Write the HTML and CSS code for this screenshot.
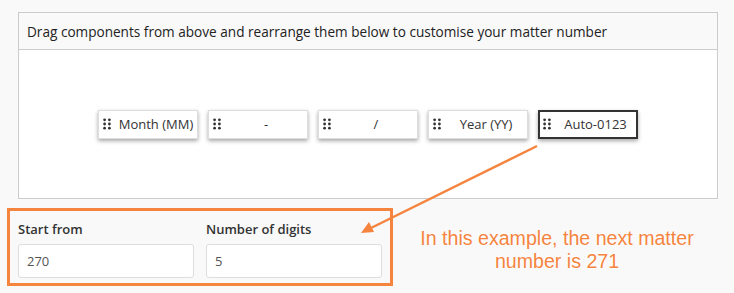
FILE: index.html
```html
<!DOCTYPE html>
<html lang="en">
<head>
  <meta charset="UTF-8" />
  <title>Matter number format</title>
  <link rel="stylesheet" href="styles.css">
</head>
<body>

  <div class="page">
    <!-- Format builder -->
    <div class="panel">
      <div class="panel-head">Drag components from above and rearrange them below to customise your matter number</div>
      <div class="panel-body">
        <div class="chip">
          <svg class="grip" viewBox="0 0 8 12"><circle cx="1.6" cy="1.8" r="1.4"/><circle cx="6.4" cy="1.8" r="1.4"/><circle cx="1.6" cy="6" r="1.4"/><circle cx="6.4" cy="6" r="1.4"/><circle cx="1.6" cy="10.2" r="1.4"/><circle cx="6.4" cy="10.2" r="1.4"/></svg>
          <span>Month (MM)</span>
        </div>
        <div class="chip">
          <svg class="grip" viewBox="0 0 8 12"><circle cx="1.6" cy="1.8" r="1.4"/><circle cx="6.4" cy="1.8" r="1.4"/><circle cx="1.6" cy="6" r="1.4"/><circle cx="6.4" cy="6" r="1.4"/><circle cx="1.6" cy="10.2" r="1.4"/><circle cx="6.4" cy="10.2" r="1.4"/></svg>
          <span>-</span>
        </div>
        <div class="chip">
          <svg class="grip" viewBox="0 0 8 12"><circle cx="1.6" cy="1.8" r="1.4"/><circle cx="6.4" cy="1.8" r="1.4"/><circle cx="1.6" cy="6" r="1.4"/><circle cx="6.4" cy="6" r="1.4"/><circle cx="1.6" cy="10.2" r="1.4"/><circle cx="6.4" cy="10.2" r="1.4"/></svg>
          <span>/</span>
        </div>
        <div class="chip">
          <svg class="grip" viewBox="0 0 8 12"><circle cx="1.6" cy="1.8" r="1.4"/><circle cx="6.4" cy="1.8" r="1.4"/><circle cx="1.6" cy="6" r="1.4"/><circle cx="6.4" cy="6" r="1.4"/><circle cx="1.6" cy="10.2" r="1.4"/><circle cx="6.4" cy="10.2" r="1.4"/></svg>
          <span>Year (YY)</span>
        </div>
        <div class="chip selected">
          <svg class="grip" viewBox="0 0 8 12"><circle cx="1.6" cy="1.8" r="1.4"/><circle cx="6.4" cy="1.8" r="1.4"/><circle cx="1.6" cy="6" r="1.4"/><circle cx="6.4" cy="6" r="1.4"/><circle cx="1.6" cy="10.2" r="1.4"/><circle cx="6.4" cy="10.2" r="1.4"/></svg>
          <span>Auto-0123</span>
        </div>
      </div>
    </div>

    <!-- Counter settings + note -->
    <div class="settings-row">
      <div class="settings">
        <div class="field">
          <label>Start from</label>
          <input type="text" value="270">
        </div>
        <div class="field">
          <label>Number of digits</label>
          <input type="text" value="5">
        </div>
      </div>
      <div class="note">In this example, the next matter<br>number is 271</div>
    </div>

    <!-- Callout arrow -->
    <svg class="callout" viewBox="0 0 734 293">
      <line x1="537" y1="146" x2="371" y2="228" />
      <polygon points="361,233 374,232 369,222" />
    </svg>
  </div>

</body>
</html>
```

FILE: styles.css
```css
* { box-sizing: border-box; margin:0; padding:0 }
body {
  font-family: 'Open Sans', 'Noto Sans', sans-serif;
  background: #f9f9f9;
  color: #333;
  font-size: 13.6px;
}

.page {
  position: relative;
  width: 734px;
  height: 293px;
  padding: 12px 16px 0 18px;
}

.panel {
  width: 700px;
  border: 1px solid #ccc;
}

.panel-head {
  height: 37px;
  padding: 0 8px;
  display: flex;
  align-items: center;
  background: #f9f9f9;
  border-bottom: 1px solid #ccc;
  color: #222;
  white-space: nowrap;
}

.panel-body {
  height: 148px;
  background: #fff;
  display: flex;
  align-items: center;
  justify-content: center;
  gap: 10px;
}

.chip {
  width: 100px;
  height: 29px;
  display: flex;
  align-items: center;
  padding: 0 0 0 4px;
  background: #fff;
  border: 1px solid #ddd;
  box-shadow: 0 2px 4px rgba(0,0,0,0.35);
  color: #333;
  font-size: 13px;
}

.chip.selected {
  border: 2px solid #333;
  padding-left: 3px;
}

.chip span {
  flex: 1;
  text-align: center;
  white-space: nowrap;
}

.grip {
  width: 8px;
  height: 12px;
  margin-right: 4px;
  fill: #333;
  flex-shrink: 0;
}

.settings-row {
  display: flex;
  width: 714px;
  margin: 9px 0 0 -11px;
}

.settings {
  display: flex;
  gap: 12px;
  padding: 9px 8px 5px 8px;
  border: 3px solid #f5843f;
}

.field label {
  display: block;
  font-weight: 600;
  font-size: 13px;
  line-height: 18px;
  margin-bottom: 6px;
  color: #333;
}

.field input {
  width: 176px;
  height: 34px;
  padding: 0 8px;
  border: 1px solid #ddd;
  border-radius: 3px;
  background: #fff;
  font-family: inherit;
  font-size: 13px;
  color: #555;
  outline: none;
}

.note {
  flex: 1;
  text-align: center;
  padding-top: 19px;
  font-family: 'Liberation Sans', Arial, sans-serif;
  font-size: 19.6px;
  line-height: 23px;
  color: #f5843f;
  text-shadow: 0 0 2px #fff, 0 0 3px #fff;
}

.callout {
  position: absolute;
  left: 0;
  top: 0;
  width: 734px;
  height: 293px;
  pointer-events: none;
}

.callout line {
  stroke: #f5843f;
  stroke-width: 2.5;
}

.callout polygon { fill: #f5843f; }
```
